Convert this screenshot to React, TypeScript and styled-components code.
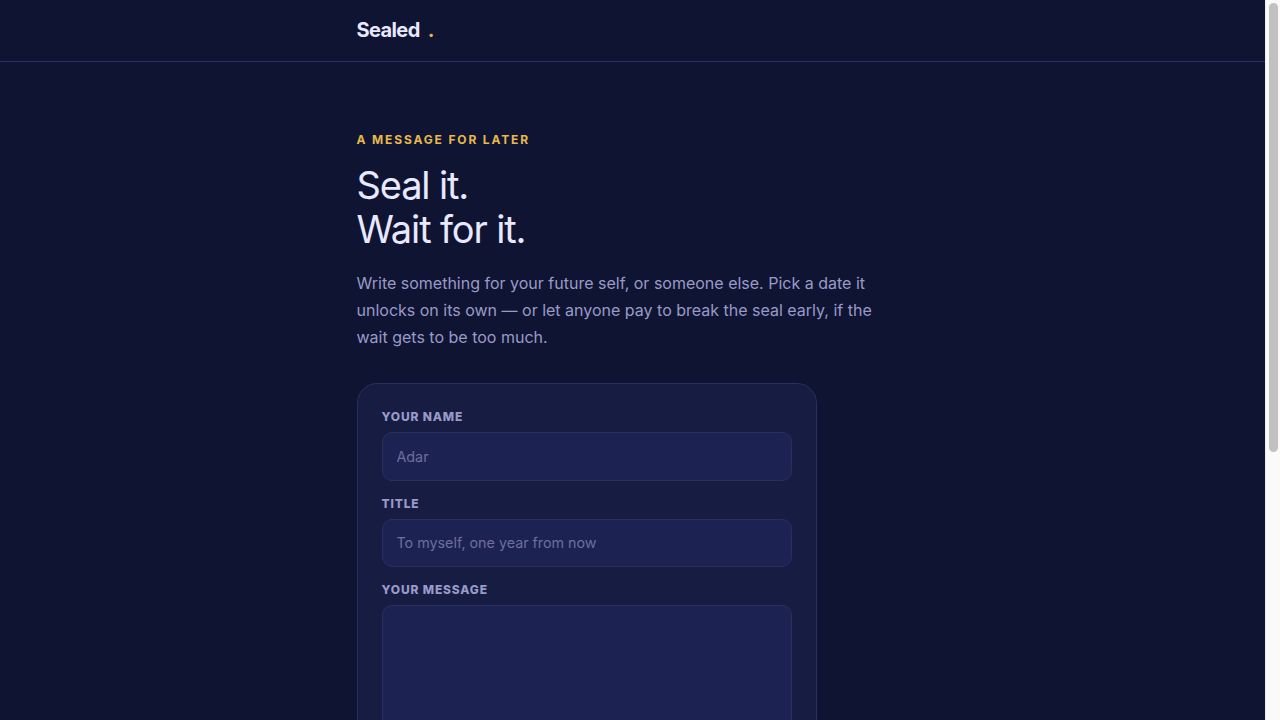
import { createGlobalStyle, styled } from 'styled-components';

const GlobalStyle = createGlobalStyle`
    body {
        margin: 0;
        background: #0f1432;
        color: #e8e8ff;
        font-family: Inter, "Liberation Sans", sans-serif;
    }
`;

export default function App() {
    return (
        <>
            <GlobalStyle />
            <Page>
                <TopBar>
                    <TopBarInner>
                        <Logo>
                            Sealed<LogoDot>.</LogoDot>
                        </Logo>
                    </TopBarInner>
                </TopBar>
                <Main>
                    <Eyebrow>A message for later</Eyebrow>
                    <Headline>
                        Seal it.
                        <br />
                        Wait for it.
                    </Headline>
                    <Lead>
                        Write something for your future self, or someone else. Pick a date it unlocks on its own — or
                        let anyone pay to break the seal early, if the wait gets to be too much.
                    </Lead>
                    <FormCard>
                        <Field>
                            <FieldLabel htmlFor="name">Your name</FieldLabel>
                            <TextInput id="name" placeholder="Adar" />
                        </Field>
                        <Field>
                            <FieldLabel htmlFor="title">Title</FieldLabel>
                            <TextInput id="title" placeholder="To myself, one year from now" />
                        </Field>
                        <Field>
                            <FieldLabel htmlFor="message">Your message</FieldLabel>
                            <MessageInput id="message" />
                        </Field>
                    </FormCard>
                </Main>
            </Page>
            <ScrollTrack>
                <ScrollThumb />
            </ScrollTrack>
        </>
    );
}

const Page = styled.div`
    padding-right: 15px;
`;

const ScrollTrack = styled.div`
    position: fixed;
    top: 0;
    right: 0;
    bottom: 0;
    width: 15px;
    background: #fafafa;
    border-left: 1px solid #ececec;
    box-sizing: border-box;
`;

const ScrollThumb = styled.div`
    width: 9px;
    height: 449px;
    margin: 3px 0 0 3px;
    background: #c1c1c1;
    border-radius: 5px;
`;

const TopBar = styled.header`
    border-bottom: 1px solid #2a2f5c;
`;

const TopBarInner = styled.div`
    box-sizing: border-box;
    max-width: 600px;
    height: 61px;
    margin: 0 auto;
    padding: 0 24px 1px;
    display: flex;
    align-items: center;
`;

const Logo = styled.div`
    font-size: 20px;
    font-weight: 700;
    letter-spacing: -0.6px;
    color: #e8e8ff;
`;

const LogoDot = styled.span`
    margin-left: 8px;
    color: #e8b84b;
`;

const Main = styled.main`
    box-sizing: border-box;
    max-width: 600px;
    margin: 0 auto;
    padding: 70px 24px 64px;
`;

const Eyebrow = styled.div`
    font-size: 12px;
    line-height: 16px;
    font-weight: 700;
    letter-spacing: 1.85px;
    text-transform: uppercase;
    color: #e8b84b;
`;

const Headline = styled.h1`
    margin: 15px 0 0;
    font-size: 38px;
    line-height: 44px;
    font-weight: 400;
    letter-spacing: -1.14px;
    color: #e8e8ff;
`;

const Lead = styled.p`
    margin: 19px 0 0;
    max-width: 520px;
    font-size: 16px;
    line-height: 27px;
    color: #9a9ac8;
`;

const FormCard = styled.form`
    box-sizing: border-box;
    width: 460px;
    margin-top: 32px;
    padding: 25px 24px 24px;
    display: flex;
    flex-direction: column;
    gap: 15px;
    background: #171c42;
    border: 1px solid #2a2f5c;
    border-radius: 20px;
`;

const Field = styled.div`
    display: flex;
    flex-direction: column;
    gap: 7px;
`;

const FieldLabel = styled.label`
    font-size: 12px;
    line-height: 16px;
    font-weight: 800;
    letter-spacing: 0.84px;
    text-transform: uppercase;
    color: #9a9ac8;
`;

const TextInput = styled.input`
    box-sizing: border-box;
    width: 100%;
    height: 48.6px;
    padding: 0 14px;
    font-family: inherit;
    font-size: 14.3px;
    color: #e8e8ff;
    background: #1c2352;
    border: 1px solid #2a2f5c;
    border-radius: 10px;
    outline: none;

    &::placeholder {
        color: #6e6ea0;
        opacity: 1;
    }
`;

const MessageInput = styled.textarea`
    box-sizing: border-box;
    display: block;
    width: 100%;
    height: 460px;
    padding: 14px;
    font-family: inherit;
    font-size: 14.3px;
    color: #e8e8ff;
    background: #1c2352;
    border: 1px solid #2a2f5c;
    border-radius: 10px;
    outline: none;
    resize: none;
`;
